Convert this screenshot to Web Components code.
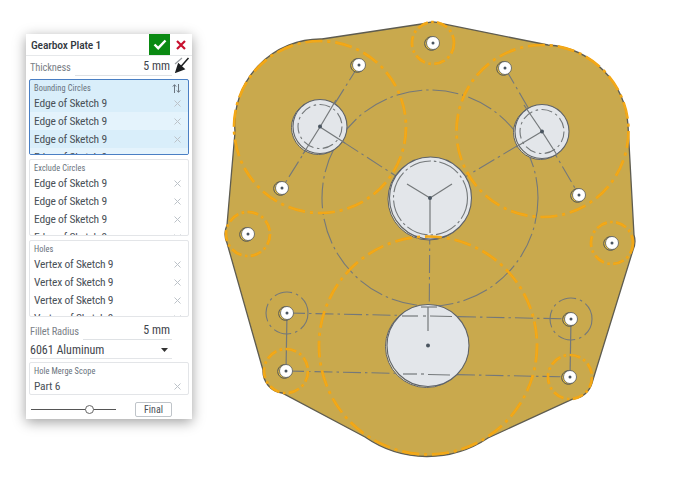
<!DOCTYPE html>
<html><head><meta charset="utf-8">
<style>
html,body{margin:0;background:#fff;font-family:Roboto,"Liberation Sans",sans-serif;font-stretch:75%}
body{width:690px;height:486px;overflow:hidden}
#page{display:flex;align-items:flex-start;padding:34px 0 0 26px}
</style></head><body>
<div id="page">
<gp-panel>
  <gp-header>Gearbox Plate 1</gp-header>
  <gp-field label="Thickness" value="5 mm" flip></gp-field>
  <gp-list label="Bounding Circles" active h="76" mb="4" mt="1" sort>
    <gp-item>Edge of Sketch 9</gp-item><gp-item>Edge of Sketch 9</gp-item><gp-item>Edge of Sketch 9</gp-item><gp-item>Edge of Sketch 9</gp-item>
  </gp-list>
  <gp-list label="Exclude Circles" h="77" mb="4">
    <gp-item>Edge of Sketch 9</gp-item><gp-item>Edge of Sketch 9</gp-item><gp-item>Edge of Sketch 9</gp-item><gp-item>Edge of Sketch 9</gp-item>
  </gp-list>
  <gp-list label="Holes" h="77" mb="3">
    <gp-item>Vertex of Sketch 9</gp-item><gp-item>Vertex of Sketch 9</gp-item><gp-item>Vertex of Sketch 9</gp-item><gp-item>Vertex of Sketch 9</gp-item>
  </gp-list>
  <gp-field label="Fillet Radius" value="5 mm"></gp-field>
  <gp-select>6061 Aluminum</gp-select>
  <gp-list label="Hole Merge Scope" h="33" mb="5"><gp-item>Part 6</gp-item></gp-list>
  <gp-foot></gp-foot>
</gp-panel>
<gp-plate></gp-plate>
</div>
<script>
function def(name, css, html, init){
  customElements.define(name, class extends HTMLElement{
    connectedCallback(){
      if(this.shadowRoot) return;
      const r=this.attachShadow({mode:'open'});
      r.innerHTML='<style>'+css+'</style>'+(typeof html==='function'?html(this):html);
      if(init) init(this,r);
    }
  });
}
def('gp-panel',
 ':host{display:flex;flex-direction:column;box-sizing:border-box;width:166px;height:385px;background:#fff;box-shadow:0 3px 12px rgba(0,0,0,.38);font-size:11px;color:#3f464d;flex:none}',
 '<slot></slot>');
def('gp-header',
 ':host{display:flex;align-items:center;height:21px;border-bottom:1px solid #e6e8ea;flex:none;padding-left:5px;font-size:11.5px;font-weight:500;letter-spacing:-.15px;color:#33393f}'+
 '.t{flex:1}.ok{width:21px;height:21px;background:#0a8a12;display:flex;align-items:center;justify-content:center}'+
 '.x{width:22px;display:flex;justify-content:center}',
 '<span class="t"><slot></slot></span><span class="ok"><svg width="14" height="11" viewBox="0 0 14 11"><path d="M1.5 5.5l3.7 3.7 7.3-7.7" fill="none" stroke="#fff" stroke-width="2.4"/></svg></span><span class="x"><svg width="10" height="10" viewBox="0 0 10 10"><path d="M1 1l8 8M9 1l-8 8" stroke="#c8102e" stroke-width="2.2"/></svg></span>');
def('gp-field',
 ':host{display:flex;align-items:center;height:22px;flex:none;padding:0 0 0 4px;position:relative;font-size:12px}'+
 '.l{color:#7b8188;font-size:10.5px;letter-spacing:-.15px}.v{flex:1;margin-left:4px;text-align:right;height:17px;line-height:16px;border-bottom:1px solid #dfe2e5;margin-right:20px;padding-right:2px;color:#3f464d}'+
 'svg{position:absolute;right:2px;top:1px}',
 h=>'<span class="l">'+h.getAttribute('label')+'</span><span class="v">'+h.getAttribute('value')+'</span>'+
 (h.hasAttribute('flip')?'<svg width="16" height="16" viewBox="0 0 16 16"><path d="M1 7L8 1" stroke="#9a9ea2" stroke-width="1.2"/><path d="M2 15L4.500 7 10 12zM7 9.500L14.500 1" fill="#1d1f21" stroke="#1d1f21" stroke-width="1.5"/></svg>':''));
def('gp-list',
 ':host{display:block;box-sizing:border-box;flex:none;margin:0 3px 4px;width:160px;background:#fff;border:1px solid #e3e5e8;border-radius:2px;overflow:hidden;position:relative}'+
 ':host([active]){background:#d9eefa;border-color:#4a7fc4}'+
 '.lab{height:14px;line-height:16px;font-size:8.3px;color:#66707a;padding-left:4px;letter-spacing:.1px}'+
 'svg{position:absolute;right:7px;top:3px}',
 h=>'<div class="lab">'+h.getAttribute('label')+'</div><slot></slot>'+
 (h.hasAttribute('sort')?'<svg width="9" height="11" viewBox="0 0 9 11"><path d="M2.500 10V2M.8 3.600l1.700-2 1.700 2M6.500 1v8M4.800 7.400l1.700 2 1.700-2" fill="none" stroke="#6c7680" stroke-width="1"/></svg>':''),
 (h,r)=>{h.style.height=h.getAttribute('h')+'px';h.style.marginBottom=(h.getAttribute('mb')||4)+'px';h.style.marginTop=(h.getAttribute('mt')||0)+'px'; if(h.hasAttribute('active')){h.querySelectorAll('gp-item').forEach((e,i)=>e.style.background=i%2?'#e4f3fc':'#d9eefa');}});
def('gp-item',
 ':host{display:flex;align-items:center;height:18px;padding-left:4px;font-size:11.5px;letter-spacing:-.2px;color:#4a5158}'+
 '.t{flex:1}svg{margin-right:7px}',
 '<span class="t"><slot></slot></span><svg width="7" height="7" viewBox="0 0 7 7"><path d="M.5.5l6 6M6.500.5l-6 6" stroke="#bcc2c8" stroke-width="1"/></svg>');
def('gp-select',
 ':host{display:flex;align-items:center;height:16px;flex:none;margin:0 20px 3px 4px;border-bottom:1px solid #e3e5e8;font-size:12px;color:#3f464d}.t{flex:1}svg{margin-right:4px}',
 '<span class="t"><slot></slot></span><svg width="7" height="4" viewBox="0 0 7 4"><path d="M0 0h7L3.500 4z" fill="#333"/></svg>');
def('gp-foot',
 ':host{display:flex;align-items:center;flex:none;height:19px;padding-left:5px}'+
 '.s{width:85px;height:1px;background:#555;position:relative}.s i{position:absolute;left:54px;top:-4px;box-sizing:border-box;width:9px;height:9px;border:1px solid #666;border-radius:50%;background:#fff}'+
 '.b{margin-left:19px;box-sizing:border-box;width:37px;height:15px;border:1px solid #bfc4c9;border-radius:2px;text-align:center;font-size:10px;line-height:13px;color:#4a5158}',
 '<span class="s"><i></i></span><span class="b">Final</span>');
def('gp-plate',
 ':host{display:block;flex:none;width:498px;height:486px;margin-top:-34px}svg{display:block}',
 ()=>{
  const O='#f6a50e', G='#74787a';
  const DD='17 5 3 5', SD='11 3.500 2.500 3.500', GD='18 4 2.500 4';
  const orange=(x,y,r,da)=>`<circle cx="${x}" cy="${y}" r="${r}" fill="none" stroke="${O}" stroke-width="2.700" stroke-dasharray="${da||DD}"/><circle cx="${x}" cy="${y}" r="${r}" fill="none" stroke="#e9ae2e" stroke-width=".6" stroke-dasharray="${da||DD}"/>`;
  const gray=(x,y,r,da)=>`<circle cx="${x}" cy="${y}" r="${r}" fill="none" stroke="${G}" stroke-width="1.100" stroke-dasharray="${da||GD}"/>`;
  const line=(a,b,c,d)=>`<line x1="${a}" y1="${b}" x2="${c}" y2="${d}" stroke="${G}" stroke-width="1.100" stroke-dasharray="${GD}"/>`;
  const solid=(a,b,c,d)=>`<line x1="${a}" y1="${b}" x2="${c}" y2="${d}" stroke="${G}" stroke-width="1.200"/>`;
  const big=(x,y,r)=>`<circle cx="${x-1.500}" cy="${y+1}" r="${r}" fill="#eee7cf" stroke="#5f6368" stroke-width="1"/><circle cx="${x}" cy="${y}" r="${r}" fill="#e3e6ea" stroke="#5f6368" stroke-width="1.100"/>`;
  const small=(x,y)=>`<circle cx="${x-1.500}" cy="${y+.5}" r="6.800" fill="#ecc23e" stroke="#4f5356" stroke-width="1"/><circle cx="${x}" cy="${y}" r="6.500" fill="#fff" stroke="#55595c" stroke-width=".8"/><circle cx="${x}" cy="${y}" r="1.500" fill="#4a5560"/>`;
  const dot=(x,y,r)=>`<circle cx="${x}" cy="${y}" r="${r||2}" fill="#4a5560"/>`;
  const plate='M322 39L425 23.500A21 21 0 0 1 441 23.500L548 45A86 86 0 0 1 628 125L634 235A21 21 0 0 1 633 250L592 383A22 22 0 0 1 573 399L488 438A109 109 0 0 1 365 437L282 393A22 22 0 0 1 263 370L227 243A22 22 0 0 1 227 225L235 132A86 86 0 0 1 322 39Z';
  return `<svg width="498" height="486" viewBox="192 0 498 486">
  <path d="${plate}" fill="#c9a94d" stroke="#5e5c50" stroke-width="1.300"/>
  ${gray(430,198,108,'26 4 2.500 4')}
  ${line(359,65,282,188)}${line(430,198,320,127)}${line(430,198,542,131)}${line(505,68,579,195)}
  ${line(287,313,571,319)}${line(286,371,570,377)}
  ${line(430,198,429,345)}
  ${solid(287,313,286,371)}${solid(571,319,570,377)}
  ${gray(287,313,21)}${gray(571,319,21)}
  ${big(320,126.5,27)}${big(542,131.5,27)}${big(430.5,198,41)}${big(428,345.5,41)}
  ${gray(320,126.5,22,SD)}${gray(542,131.5,22,SD)}${gray(430.5,198,37,'22 3 2.500 3')}
  ${solid(336,100,320,127)}
  ${solid(320,127,303,154)}${solid(320,127,345,143)}
  ${solid(542,131.5,524,105)}${solid(542,131.5,557,155)}${solid(542,131.5,516,147)}
  ${solid(430,198,430,233)}${solid(430,198,407,184)}${solid(430,198,452,184)}
  ${solid(428,307,428,331)}${solid(421,307,437,307)}
  ${solid(402,316,418,316)}${solid(423,316,426,316)}${solid(430,316,452,316.5)}
  ${solid(403,374,417,374)}${solid(421,374,424,374)}${solid(428,374.5,450,375)}
  ${dot(320,126.5)}${dot(542,131.5)}${dot(430,198)}${dot(428,345.5)}
  ${orange(320,127,86)}${orange(542.5,131,86)}${orange(428,345.5,109)}
  ${orange(433,43,21,SD)}${orange(248,234,22,SD)}${orange(612,243,21,SD)}
  ${orange(286,371,22,SD)}${orange(570,377,22,SD)}
  ${small(433,43)}${small(248,234)}${small(612,243)}${small(359,65)}${small(282,188)}${small(505,68)}${small(579,195)}
  ${small(287,313)}${small(286,371)}${small(571,319)}${small(570,377)}
  </svg>`;
 });
</script>
</body></html>
